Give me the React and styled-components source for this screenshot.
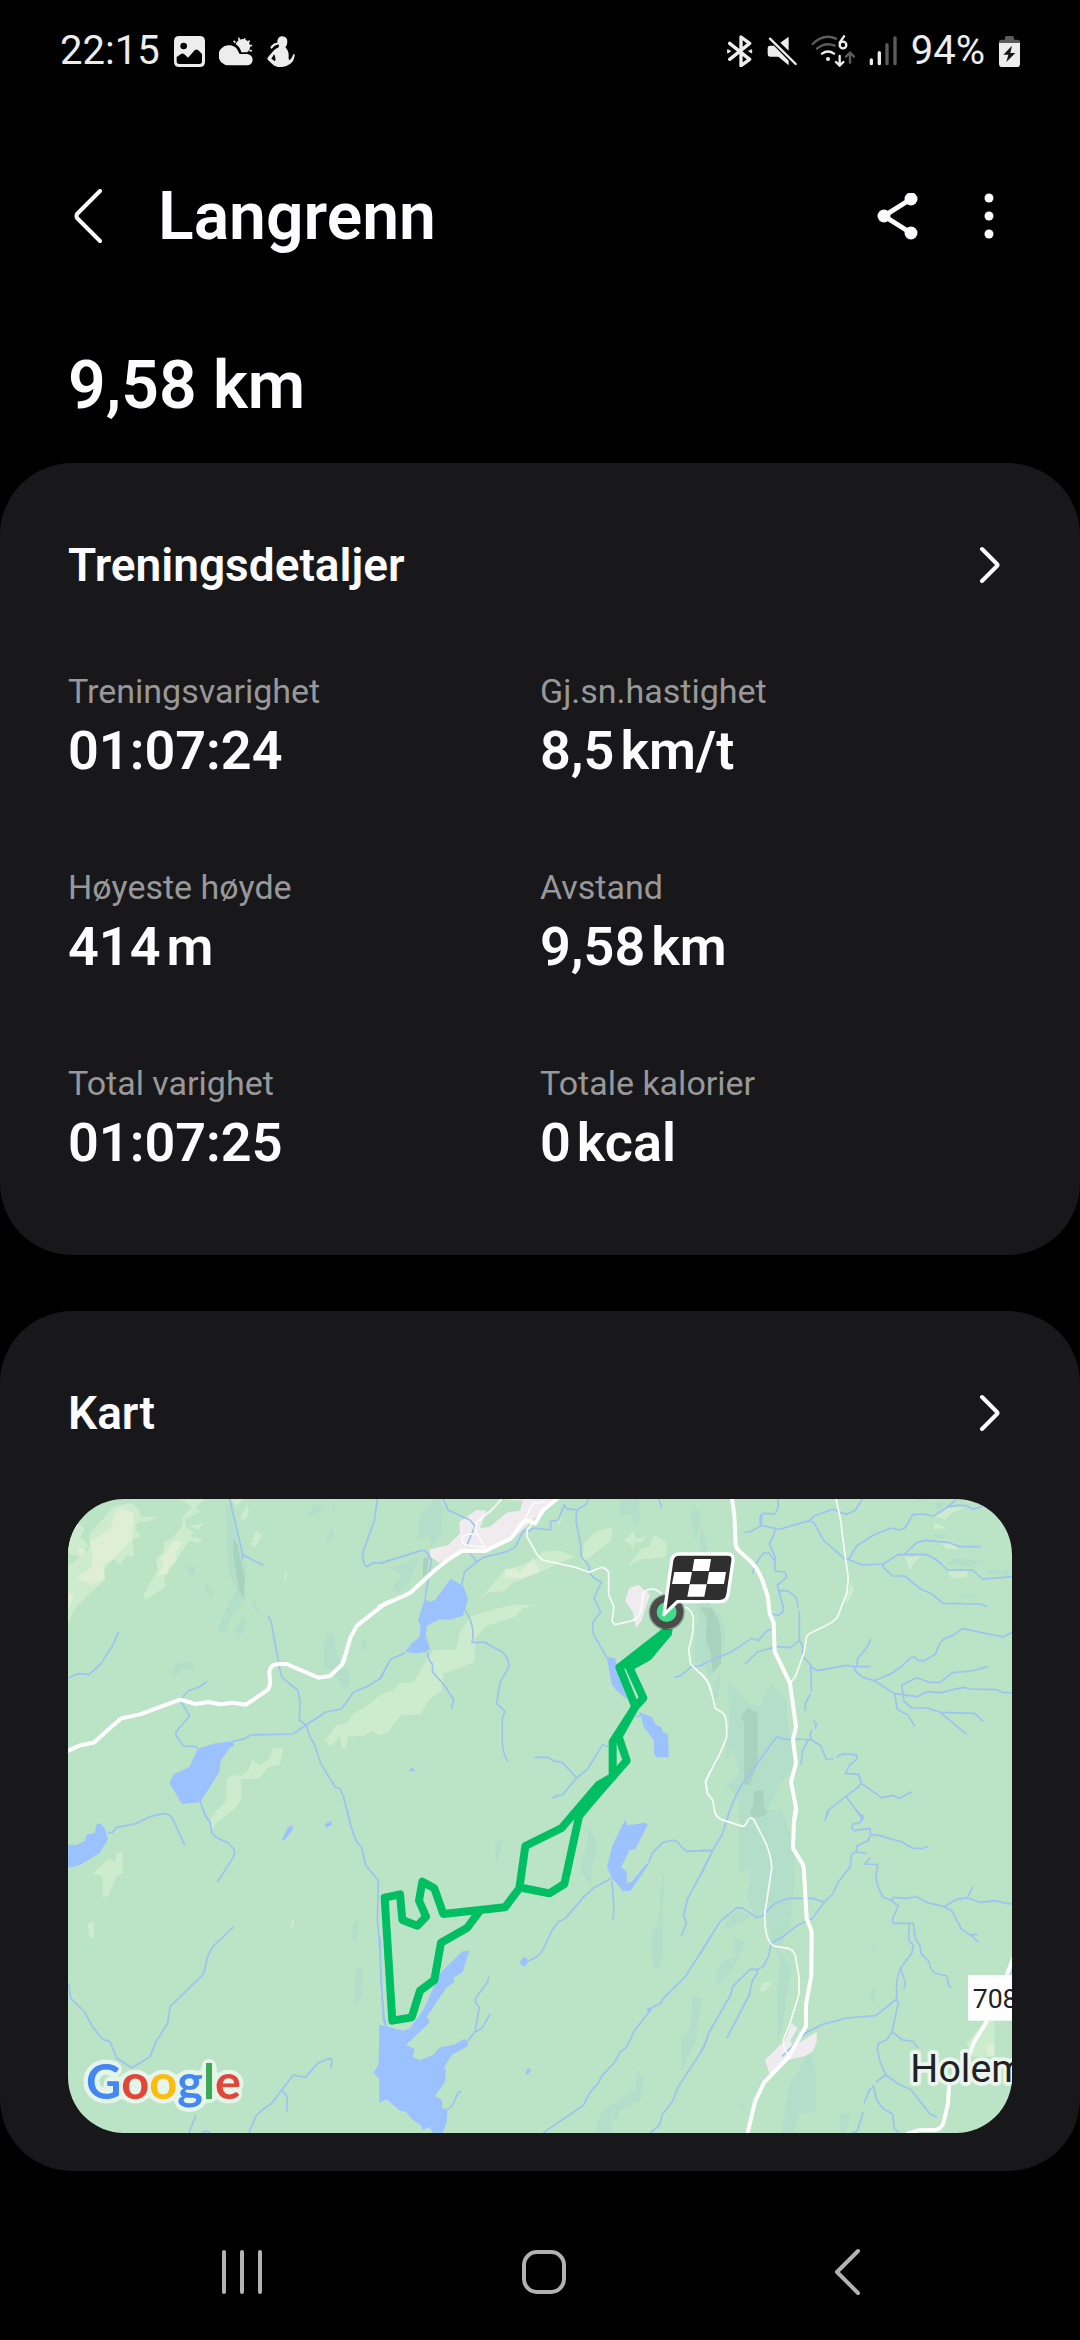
import React from "react";
import styled, { createGlobalStyle } from "styled-components";

const stats = [
  { label: "Treningsvarighet", value: "01:07:24" },
  { label: "Gj.sn.hastighet", value: "8,5", unit: "km/t" },
  { label: "Høyeste høyde", value: "414", unit: "m" },
  { label: "Avstand", value: "9,58", unit: "km" },
  { label: "Total varighet", value: "01:07:25" },
  { label: "Totale kalorier", value: "0", unit: "kcal" },
];

// Map terrain, split in six tiles. x/y is where the tile starts in the map.
const tiles = [
  {
    x: -24,
    y: -27,
    light: [
      "M0 27H70L48 100L75 115L60 140L85 165L62 200L24 190Z",
      "M24 230L60 200L90 170L88 130L130 85L160 50L212 38L240 60L238 80L292 80L270 92L232 98L228 120L242 140L218 148L222 200L200 198L180 224L160 208L134 235V270L48 350L24 400Z",
      "M360 27H432L405 58L426 62L375 88L378 110L400 125L392 140L428 145L412 160L388 150L330 240L312 262L316 290L258 330L248 318L292 240L288 205L310 190L312 158L340 140L365 112L368 80L395 50Z",
      "M388 108L432 100L414 120Z",
      "M562 45L566 70L550 96L541 80Z",
      "M512 27H550L528 48Z",
      "M588 122L607 135L585 172L571 165Z",
      "M676 238L683 255L670 276Z",
      "M990 606L965 612L920 648L880 672L862 700L828 706L794 752L812 770L840 740L845 775L858 775L864 740L910 738L934 724L958 736L990 725Z",
      "M640 774H670L660 824L624 832L598 866H542L544 930L520 960L480 990H446L500 930V865L525 852L540 862L568 838L575 808L600 826L628 806Z",
    ],
    pale: [
      "M160 75L180 55L222 70L216 150L182 185L160 208L130 225L134 270L90 283L52 264L95 230L98 200L90 155L130 130L155 112Z",
      "M345 150L368 158L345 190L350 212L326 230L322 252L290 258L312 220L303 205Z",
      "M24 305L42 320L24 355Z",
      "M50 172L75 182L65 200Z",
    ],
    shade: [
      "M498 45L520 40L522 110L556 230V325L535 350L512 380L494 438L474 415L500 355L530 300L505 240Z",
      "M740 75L765 45H790L775 70L748 84Z",
      "M815 32L828 50L818 70Z",
      "M818 100L820 140L795 170Z",
      "M375 228L408 232L400 264Z",
      "M432 270L455 295L460 322L436 300Z",
      "M570 335L585 332L600 362L592 375Z",
      "M548 380L560 395L545 436L522 425Z",
      "M336 552L350 520L405 516L400 540L362 538L346 565Z",
      "M802 430L818 432L832 500L872 560L865 590H845L822 545L792 530V470Z",
      "M904 447L918 450L916 483L903 475Z",
    ],
    rock: ["M520 145L532 165L555 270L550 325L538 300L520 200Z"],
    lake: ["M414 776L465 760L518 754L522 768L510 772L482 812L478 846L421 936L366 942L328 878L342 852L388 832Z"],
    stream: [
      "M509 27L549 195L547 204L549 195L610 226",
      "M952 27L943 92L907 192L912 222L920 230L940 218L965 219L990 211",
      "M24 565L52 551L87 554L123 521L156 470L176 426",
      "M441 574L418 591L384 603L360 630L389 678L347 726L349 739L371 768L408 770L414 776",
      "M624 376L634 398L660 540L666 562L714 602L720 635L718 690L738 705L750 740L764 765L782 820L825 890L840 896L850 918L868 990",
      "M518 754L555 746L572 735L698 732L738 705L798 666L844 657L881 606L920 590L963 564L990 510",
      "M421 936L434 974L446 990",
    ],
    road: ["M20 784L60 766L101 758L150 714L184 685L240 673L360 629L408 642L445 636L482 643L518 638L558 644L624 599Q631 590 630 575L628 545Q632 522 655 522L680 522L775 563L810 558L845 525Q853 510 856 495L872 440L892 406L975 341L994 333"],
    lane: [],
  },
  {
    x: 936,
    y: -27,
    light: [
      "M290 338L370 245L468 208L486 184L545 182L586 201L545 215L480 246L400 278L370 304L322 308Z",
      "M228 480L240 425L275 378L345 358L405 343L468 347L432 354L405 380L320 408L285 445L284 515L190 552L184 602L145 632L122 674H65L25 722L0 735V615L38 602L60 580L102 576L134 520L160 480Z",
      "M697 110L694 152L625 205L607 220L608 190L615 155L650 124Z",
      "M732 153L760 122L768 147L803 137L783 158L764 154L758 179L750 160Z",
      "M744 227L784 178L808 170L822 135L842 146L860 160L858 195L845 204L785 208Z",
      "M527 88L545 80L540 104Z",
    ],
    pale: [
      "M374 264V238L405 234L418 250L460 205L480 244L430 265Z",
    ],
    shade: [
      "M180 27L188 60L185 130L152 175V140L112 150L120 80L158 27Z",
      "M30 235L122 198L90 270L60 306L33 300L68 255Z",
      "M720 27H775L782 92L764 104L752 72H735L722 90Z",
      "M935 62L958 60V110L948 150L935 95Z",
      "M940 330H990V520L945 515V425L960 380Z",
    ],
    rock: ["M130 205L147 200L142 250L128 262Z", "M975 340H990V475L978 478Z"],
    urban: [
      "M370 27H530L490 60L400 145L320 188L240 182L178 218L150 200V178L205 165L240 130L238 96L290 60L320 62L300 115L330 110L380 68L420 62L428 32Z",
      "M748 294L775 284L810 315L795 358L786 390L768 414L758 365L735 332Z",
    ],
    lake: [
      "M212 266L250 288L264 328L248 378L205 390L178 388L140 408L138 438L150 476L136 487L110 490L76 486L95 460L118 442L122 405L114 390L135 325L148 335L165 330Z",
      "M680 500L705 505L742 630L708 600L695 582Z",
      "M782 668L815 680L828 705L845 712L848 726L864 732L866 802H830L822 790V752L790 708Z",
      "M97 832L106 843H88Z",
    ],
    stream: [
      "M0 220L122 182Q135 180 142 188L154 210L148 250L135 325",
      "M190 27L204 60L270 90L285 108L260 168",
      "M270 190L290 216L254 245L245 285",
      "M290 216L310 202L383 184L405 172L430 122L448 122L462 114L512 120V94L535 90L553 44L560 56L590 60L620 42L625 27",
      "M590 60L588 92L602 165L604 200L627 228L630 250L643 265L664 276L642 324L662 365L637 400L640 432L680 503",
      "M248 354Q265 370 272 394Q284 425 276 457H315L345 475Q375 485 384 510L387 530L360 578L350 640L375 664L367 685V762Q372 800 384 815",
      "M76 488L32 508L0 566",
      "M143 485Q143 510 157 522L158 546L195 588L221 630L214 657",
      "M836 27L846 54",
      "M463 802H505L518 811L548 818L590 864L622 838L668 764L685 770",
      "M590 864L547 915L532 916L517 925",
      "M884 562L900 558L935 530L960 528L990 517",
      "M765 680L782 678L780 668",
    ],
    road: ["M-6 352L90 309L165 240L200 212L245 183H315L392 146L428 97Q440 90 450 94L465 100L490 60L534 24"],
    lane: [
      "M365 27L335 60L292 95L285 118L314 172L260 165Q244 160 246 145Q250 132 275 132L290 135",
      "M495 36L460 40L432 92M455 103L442 120L440 138L472 195L488 210L590 233L628 247L665 232Q684 236 686 250V315L702 350L696 392L704 404L755 393Q780 385 785 350L790 310Q800 294 825 298L845 310",
      "M915 350Q940 362 940 390L938 430L926 480L932 522L975 565Q988 580 990 600",
      "M990 845L978 875L982 910L990 920",
    ],
  },
  {
    x: 1896,
    y: -27,
    light: [
      "M706 78L738 50L790 54L755 70L735 90Z",
      "M706 98L739 115L700 116Z",
      "M616 202L665 197L640 222L630 244Z",
      "M744 245L805 240L800 262L755 266Z",
      "M722 160H755L778 178L738 176Z",
      "M456 278L460 305L440 344L435 320Z",
    ],
    pale: [],
    shade: [
      "M0 120L20 145L22 180L0 185Z",
      "M0 340L30 345L64 380L75 430L72 490L40 555L20 560V530L0 515Z",
      "M82 572L115 605L140 640L180 650L212 575L260 630L265 720L285 830L250 870L185 990H118V930L80 885L120 850L95 770Z",
      "M744 222L755 204L854 212L808 232Z",
      "M862 240H936L925 258L870 252Z",
      "M698 134L748 132L722 148Z",
      "M640 38L655 28H685Z",
      "M694 38L738 36L720 60Z",
      "M770 320L815 312L825 325Z",
      "M40 580L62 545L55 625L40 620Z",
      "M118 668V750L75 815L80 730Z",
    ],
    rock: [
      "M0 350L35 355L56 390L64 440L63 522L38 548L32 490L18 450L20 385Z",
      "M142 653L173 670V820L150 884H132V695L123 685Z",
      "M162 902L191 900V945L200 972L185 980H150L160 940Z",
    ],
    lake: ["M180 72L188 76L186 104L178 102Z"],
    stream: [
      "M233 27L235 50L225 72L190 70L180 84L184 106L150 126H133",
      "M184 106L238 118L328 92L342 78L398 58L438 73L464 62L488 27",
      "M328 92L342 98L370 150L432 205L450 210L487 225L550 222L594 194L676 193Q706 200 742 240H818L847 267L936 260",
      "M446 208L470 168L516 138L572 114L598 120L615 114L638 74L670 72L700 78L735 57L770 27",
      "M738 52L770 46L796 46L820 58L850 48",
      "M614 192L650 158L678 151L748 158L780 170L842 170",
      "M550 222V232L578 258H614L662 297L695 312L730 340L840 342L862 349",
      "M225 118L222 135L208 162L225 200V243L255 246L260 262L232 285L236 302L249 346V366L235 376L215 372",
      "M157 252L165 225L190 189H207L225 214",
      "M236 302H262L288 322L295 352M298 362V452L308 468V500L332 525L334 604M332 612L316 640V662",
      "M0 526L95 485L155 445L175 452L196 427L214 416",
      "M298 452L272 473L230 470L172 486L135 523",
      "M332 530L352 542L440 526L463 530H510M470 528L474 504L500 474L512 447",
      "M463 530L465 542L488 562L522 572L572 552L606 528L634 502H645L655 512H672L706 493L718 462L730 448L758 436L788 416L910 441L936 427",
      "M522 572L584 611L650 620L682 605L722 608L790 592L810 597L890 599L912 608H936",
      "M584 611L591 657L625 676L645 710",
      "M863 530L815 543L758 548L720 577H688L650 563L605 586L612 634L636 654H682L720 667L824 670L850 695M720 667L800 733",
      "M340 690L349 702L345 716M336 720L330 735L335 750L285 747L255 748L230 740L125 885Q98 930 80 990",
      "M325 750L308 780L303 824M335 750L363 768L378 807H400M410 803Q422 790 440 792L470 795V808L448 826L436 850L475 853L484 878L474 892L438 919L388 958L375 990M438 919L490 990M484 880L545 923L578 916L598 925L636 905",
    ],
    road: ["M95 20L103 75L107 165Q110 178 122 187L150 212Q170 230 185 265L203 318L209 370L221 400L224 485L270 580L288 710L279 750L288 820L273 875L289 958L282 996"],
    lane: [
      "M408 27L421 85L435 195L445 265L440 310L412 382Q400 396 380 406L330 430Q318 438 318 450L312 488L286 560L270 580",
      "M0 548Q20 565 30 590L46 655L68 668Q80 680 80 715V742L60 790L16 874L22 910L38 930L45 968Q55 990 72 990M145 990L155 984L163 990",
    ],
  },
  {
    x: -24,
    y: 933,
    light: [
      "M470 0H498L458 55L446 35Z",
      "M146 146L165 155L168 130L188 126V190L170 198L145 256L128 264V198L96 192Z",
      "M83 343L101 335L102 385L88 380Z",
      "M704 320L698 362L690 345Z",
    ],
    pale: [],
    shade: [
      "M893 328L892 395L876 385L873 350Z",
      "M908 468L907 550L890 586L884 570L888 480Z",
    ],
    lake: [
      "M20 103L50 105L75 92L80 74L105 68L110 42L122 41L135 58L144 88L118 130L60 165L20 175Z",
      "M698 45V60L672 92L666 90L682 55Z",
      "M794 43L814 32L816 44L798 54Z",
      "M960 645L1000 655V880L980 868L958 878L968 838L962 812L941 788L955 765Z",
    ],
    stream: [
      "M144 68L157 68L168 53L224 42L270 20L312 10Q330 12 340 30L375 108",
      "M430 0L438 22L450 34L456 70Q466 82 480 88L505 99L523 120V135L518 145L471 218",
      "M521 351L458 410L442 442L434 480L427 496L330 590L323 640L288 695L270 740L216 774L170 744L150 695L128 688L98 650L72 603L32 565L26 520",
      "M862 0Q870 50 890 95L904 110L917 165L955 212L952 330L958 400L964 500L970 630L978 650",
      "M812 776L816 752L812 744L775 758L736 802L700 795L665 840L635 880L606 900L588 918L567 968M665 840L682 860L680 905",
      "M408 915L387 968M424 968L438 962L452 968",
    ],
    road: [],
    lane: [],
  },
  {
    x: 936,
    y: 933,
    light: [],
    pale: [],
    shade: [
      "M345 98L370 88L362 125L348 158Z",
      "M625 52L646 80V140L636 165L635 230L605 190L603 150L618 130Z",
      "M848 190L856 200L848 290V430L836 478L820 480L815 370L832 345Z",
      "M936 556L966 564L948 690L905 782L903 682L932 655Z",
      "M770 780L792 808L780 872L722 900L708 936L695 905L694 968H645L662 905L765 840Z",
    ],
    lake: [
      "M-2 645L70 662L90 655L130 600L175 500L185 484L248 424L268 422L248 486L220 503L223 516L200 532L140 620L150 636L78 705L104 717L98 740L118 751L158 736L180 712L222 704L252 687L264 695V708L215 735L192 772L198 780L195 815L165 858L186 870L187 895L202 898L200 940L188 968H158L150 952L128 960L122 945L95 928L78 905L60 902L18 866L-2 878Z",
      "M735 30L742 46L795 38L803 45L766 118L748 120L724 172L740 185L742 220L755 215L800 160L805 165L752 242L730 244L696 205L681 170L697 108Z",
      "M421 452L434 440L447 452L436 470L422 464Z",
      "M437 790L442 777L452 775L450 786L442 794Z",
      "M800 600L808 590L816 599L806 608Z",
    ],
    stream: [
      "M446 453L468 442L485 426L515 364L535 336L555 326L612 260L642 233L694 205",
      "M696 212L702 300L698 332",
      "M805 160L818 128L848 98L878 90L895 97Q905 115 922 124L990 121",
      "M990 140L922 268L911 315L919 341L904 377",
      "M990 384L916 500L850 565L842 580L818 592L762 664L740 712L722 724L702 760L668 794L654 820L628 850L610 886L490 968",
      "M990 660L972 712L895 830L878 874L848 912L838 946L812 968",
      "M327 499L323 515L287 565V580L298 592L285 666L262 694M285 666L306 655L331 611",
      "M243 844L233 850L217 888L202 898",
      "M0 380L3 520L12 620L18 648",
    ],
    road: [],
    lane: [],
  },
  {
    x: 1896,
    y: 933,
    light: [
      "M190 516L215 517L196 544L176 542Z",
      "M855 632H884V712L870 740H820L800 700Z",
    ],
    pale: ["M862 706L882 704L884 738L860 735Z"],
    shade: [
      "M118 0H245L280 95L285 220L270 345L240 420L275 470L268 520L245 660L232 690V560L240 450L215 400L195 290L165 330L142 260L155 175L118 185Z",
      "M72 360L80 320L112 302L150 320L120 340Z",
      "M46 500L60 460L102 440V380L132 396L115 450L90 490L50 530Z",
      "M330 720L350 800L348 905L298 910L280 968H245L265 835Z",
      "M420 912L448 910V940L435 968H418Z",
      "M518 392L525 410L522 435Z",
      "M524 535V592L507 545Z",
      "M120 865L130 885L122 900Z",
    ],
    rock: ["M150 0H200V12L180 22H155Z"],
    urban: [
      "M275 640L293 655L272 690L278 712L350 665V695L338 725L315 738L262 750L210 795L195 750L255 690Z",
    ],
    lake: ["M480 15L492 15L488 35Z", "M500 86L510 84L506 95Z"],
    stream: [
      "M90 0L67 72L38 122L0 200M0 122H38",
      "M384 0L375 32",
      "M468 0L487 20L480 38L460 42Q450 52 462 62L510 55L512 75L504 92L470 108V126L500 130M468 124Q450 130 452 168L415 216L398 252L372 278L336 326L292 346L245 382L214 400L205 440L188 472L172 478L150 478L98 530L92 555L25 670Q18 700 0 728",
      "M170 478L172 490L157 512L148 555L80 685",
      "M372 276L338 265H265L222 282L186 318L170 322L128 295L110 293L60 335L0 432",
      "M512 74L540 77L606 96L636 114L665 116L685 109",
      "M512 142L495 162L533 163L528 205Q535 240 550 262L572 270L595 288L578 325V340H640L645 382L660 408L663 430L688 456Q690 480 705 489L740 498L747 528L755 532",
      "M572 270L582 262L618 265L650 260L680 277L732 290L770 268L802 264L840 277L885 272L920 281H936M802 264L818 231M732 290L755 302L785 358L810 374H832M810 374L837 397",
      "M628 344L626 392L640 404L636 428L602 474L590 512V567L527 617L440 624L365 644L318 668L246 740M602 474L616 518L612 536",
      "M590 567L595 577L576 666L560 690L536 700L532 716L540 755L557 795L528 816M576 666L608 690L638 694L655 715",
      "M520 830L508 840L492 880M520 825L530 870L548 895L578 912L583 955L598 968M490 905L472 962L455 968M557 795L600 825L632 838L690 912L712 922",
    ],
    road: [
      "M288 -4L282 30L279 115L307 160Q312 170 312 185L320 325L335 365L334 495L318 585V648L265 742L192 818L165 875L142 972",
      "M940 445L920 495M862 632L820 700L805 745M748 815L744 880L730 940Q722 960 700 960L655 961L620 972",
    ],
    lane: ["M42 0Q48 20 62 28L128 49Q136 48 142 34Q152 16 162 30L200 105Q216 150 215 175L194 315L195 345Q200 400 225 409L265 415Q288 425 288 450L297 500V552L270 640L250 690L252 715L265 735"],
  },
];

const GlobalStyle = createGlobalStyle`
  * {
    box-sizing: border-box;
  }

  body {
    margin: 0;
    background: #000000;
    color: #fcfcff;
    font-family: Roboto, "Noto Sans", sans-serif;
  }

  svg {
    display: block;
  }
`;

const Page = styled.div`
  display: flex;
  flex-direction: column;
  min-height: 100vh;
`;

const StatusBar = styled.div`
  display: flex;
  justify-content: space-between;
  padding: 27px 60px 25px;
  color: #ededed;
  font-size: 40px;
  line-height: 48px;
`;

const StatusGroup = styled.div`
  display: flex;
  align-items: center;
  gap: 14px;
`;

const Header = styled.header`
  display: flex;
  align-items: center;
  padding: 79px 67px 0 64px;
`;

const Title = styled.h1`
  flex: 1;
  margin: 0 0 0 46px;
  font-size: 66px;
  font-weight: 600;
  line-height: 76px;
`;

const IconButton = styled.button`
  display: flex;
  align-items: center;
  justify-content: center;
  width: 48px;
  height: 52px;
  padding: 0;
  border: 0;
  background: none;
  color: inherit;
  cursor: pointer;
`;

const HeaderActions = styled.div`
  display: flex;
  gap: 44px;
`;

const Summary = styled.p`
  margin: 93px 68px 39px;
  font-size: 66px;
  font-weight: 600;
  line-height: 76px;
`;

const Cards = styled.main`
  display: flex;
  flex-direction: column;
  gap: 56px;
`;

const Card = styled.section`
  padding: 76px 68px ${(props) => props.$bottom}px;
  border-radius: 72px;
  background: #18181a;
`;

const CardHeader = styled.div`
  display: flex;
  align-items: center;
  justify-content: space-between;
  margin-bottom: ${(props) => props.$space}px;
`;

const CardTitle = styled.h2`
  margin: 0;
  font-size: 46px;
  font-weight: 600;
  line-height: 52px;
`;

const StatGrid = styled.dl`
  display: grid;
  grid-template-columns: 1fr 1fr;
  row-gap: 84px;
  margin: 0;
`;

const Label = styled.dt`
  color: #98989a;
  font-size: 34px;
  line-height: 40px;
`;

const Value = styled.dd`
  display: flex;
  gap: 6px;
  margin: 8px 0 0;
  font-size: 54px;
  font-weight: 600;
  line-height: 64px;
`;

const MapFrame = styled.div`
  overflow: hidden;
  border-radius: 56px;
  background: #bbe3c6;

  svg {
    width: 100%;
    height: auto;
  }
`;

const NavBar = styled.nav`
  display: flex;
  justify-content: center;
  gap: 254px;
  margin-top: auto;
  padding: 0 0 42px 8px;
  color: #b2b2b2;
`;

const Chevron = () => (
  <svg width="24" height="40" viewBox="0 0 24 40" fill="none" stroke="currentColor" strokeWidth="4" strokeLinecap="round" strokeLinejoin="round">
    <path d="M6 4L21 19Q22 20 21 21L6 36" />
  </svg>
);

const StatusIconsLeft = () => (
  <>
    <svg width="31" height="31" viewBox="402 47 93 93" fill="currentColor">
      <path fillRule="evenodd" d="M418 47H479Q495 47 495 63V124Q495 140 479 140H418Q402 140 402 124V63Q402 47 418 47ZM431 67A10 10 0 1 0 431 87A10 10 0 1 0 431 67ZM410 110V123Q410 131 418 131H478Q486 131 486 123V101L474 89Q469 85 464 90L444 112L433 102Q428 97 423 101Z" />
    </svg>
    <svg width="34" height="31" viewBox="538 47 102 93" fill="currentColor">
      <path d="M566 75C580 74 592 82 597 96L600 101H622A17 17 0 0 1 622 135H567A29 29 0 0 1 566 75Z" />
      <path d="M588 72A22 22 0 1 1 622 96H605Q600 78 588 72Z" />
      <path d="M587 67L582 61M599 60L597 52M613 61L616 54M624 67L630 61M629 78L637 75M629 90L637 92" stroke="currentColor" strokeWidth="5" />
    </svg>
    <svg width="28" height="31" viewBox="689 47 84 93" fill="currentColor">
      <path fillRule="evenodd" d="M720 62Q722 48 735 48Q750 49 750 64Q750 76 744 81Q755 92 754 108Q753 118 756 119Q763 116 767 103Q772 98 772 106Q770 122 758 131Q744 141 730 140Q713 140 704 130L692 119Q688 114 693 109L710 90Q715 84 722 82Q727 78 723 72L712 76L703 85Q696 83 702 76Q710 66 720 67ZM710 102L702 115L713 123Q717 112 710 102Z" />
    </svg>
  </>
);

const StatusIconsRight = () => (
  <>
    <svg width="27" height="32" viewBox="79 44 81 96" fill="none" stroke="currentColor" strokeWidth="10" strokeLinejoin="round" strokeLinecap="round">
      <path d="M90 69L150 117L124 136V50L150 69L90 117" />
      <path d="M84 89V98L92 93ZM156 89V98L148 93Z" strokeWidth="3" fill="currentColor" />
    </svg>
    <svg width="30" height="30" viewBox="206 48 90 90" fill="currentColor">
      <path d="M208 84Q208 77 215 77H227L271 122V136L240 110H215Q208 110 208 103ZM271 50V92L246 68Z" />
      <path d="M215 56L292 132" stroke="currentColor" strokeWidth="7" strokeLinecap="round" />
    </svg>
    <svg width="44" height="32" viewBox="340 45 132 96" fill="none" strokeWidth="7" strokeLinecap="round">
      <path d="M345 72Q378 39 415 56M358 86Q383 65 411 77M457 128V100M445 110L457 98L469 110" stroke="#5c5c5c" />
      <path d="M373 101Q391 88 409 101M426 108V135M415 126L426 137L437 126" stroke="currentColor" />
      <circle cx="391" cy="117" r="6" fill="currentColor" />
      <path d="M439 49L426 68" stroke="currentColor" />
      <circle cx="436" cy="75" r="10" stroke="currentColor" />
    </svg>
    <svg width="28" height="32" viewBox="499 44 84 96" fill="none" stroke="currentColor" strokeWidth="10" strokeLinecap="round">
      <path d="M506 119V130M530 97V130" />
      <path d="M553 73V130M577 53V130" stroke="#5c5c5c" />
    </svg>
  </>
);

const BatteryIcon = () => (
  <svg width="21" height="31" viewBox="897 47 63 93">
    <path d="M897 68V65Q897 58 905 58H915V52Q915 47 920 47H937Q942 47 942 52V58H952Q960 58 960 65V68Z" fill="#5c5c5c" />
    <path d="M897 68H960V130Q960 140 950 140H907Q897 140 897 130Z" fill="currentColor" />
    <path d="M936 76L910 103H925L919 125L946 98H931Z" fill="#161616" />
  </svg>
);

const RouteMap = () => (
  <svg viewBox="0 0 2832 1902" role="img" aria-label="Kart over turen">
    <defs>
      {/* Soft round outline behind the map logo */}
      <filter id="halo" x="-10%" y="-20%" width="120%" height="140%" colorInterpolationFilters="sRGB">
        <feGaussianBlur in="SourceAlpha" stdDeviation="9" />
        <feComponentTransfer result="grown">
          <feFuncA type="linear" slope="20" intercept="-1" />
        </feComponentTransfer>
        <feFlood floodColor="#e6f5ea" />
        <feComposite in2="grown" operator="in" result="outline" />
        <feMerge>
          <feMergeNode in="outline" />
          <feMergeNode in="SourceGraphic" />
        </feMerge>
      </filter>
    </defs>
    {tiles.map((tile) => (
      <g key={`${tile.x}:${tile.y}`} transform={`translate(${tile.x} ${tile.y})`}>
        <path d={tile.shade.join("")} fill="#b3dfca" />
        <path d={tile.light.join("")} fill="#cdebcd" />
        <path d={tile.pale.join("")} fill="#dfeed6" />
        {tile.rock && <path d={tile.rock.join("")} fill="#a9d2bc" />}
        {tile.urban && <path d={tile.urban.join("")} fill="#efebef" />}
        <path d={tile.stream.join("")} fill="none" stroke="#9dc3f2" strokeWidth="5" strokeLinejoin="round" />
        <path d={tile.lake.join("")} fill="#9cc1ff" />
        <path d={tile.lane.join("")} fill="none" stroke="#f8fdf9" strokeWidth="5" strokeLinejoin="round" />
        <path d={tile.road.join("")} fill="none" stroke="#ffffff" strokeWidth="12" strokeLinejoin="round" />
      </g>
    ))}

    {/* Track and finish flag */}
    <g transform="translate(936 -27)">
      <g fill="none" stroke="#00bf63" strokeWidth="24" strokeLinejoin="round">
        <path d="M862 420L718 532L766 650L790 624L748 532L805 500L866 425M766 650L698 756V860L655 885L545 1014L436 1068L418 1195L375 1252L190 1272L163 1195L127 1175L117 1232L138 1280L112 1307L67 1290L60 1213L14 1223L37 1592L95 1582L120 1502L163 1470L183 1358L262 1313L300 1262" />
        <path d="M766 650L716 740L740 812L698 860L598 975L553 1182L508 1210L428 1194" />
      </g>
      <path d="M850 415L878 418L875 435L812 508L760 537L720 535ZM655 880L700 858L700 870L610 982L590 990L560 985Z" fill="#00bf63" />
      <circle cx="860" cy="367" r="54" fill="#2b3b33" opacity="0.4" />
      <circle cx="860" cy="366" r="40" fill="#3fdc8b" stroke="#4b4b4b" strokeWidth="20" />
      <path d="M852 374L875 212Q878 192 898 192H1042Q1062 192 1059 212L1044 314Q1040 335 1019 335H892Z" fill="#2f2f2f" stroke="#ffffff" strokeWidth="10" strokeLinejoin="round" />
      <path d="M943 207H993L987 243H937ZM883 246H936L929 282H876ZM987 246H1038L1032 282H981ZM929 283H980L973 320H922Z" fill="#ffffff" />
    </g>

    <g transform="translate(1896 933)" fontFamily="Roboto, sans-serif" fill="#202124">
      <rect x="804" y="495" width="140" height="137" fill="#ffffff" />
      <text x="818" y="595" fontSize="80">708</text>
      <text x="631" y="815" fontSize="118" stroke="#eaf5ed" strokeWidth="22" paintOrder="stroke" strokeLinejoin="round">Holem</text>
    </g>

    <text x="54" y="1800" fontFamily="Lato, sans-serif" fontSize="146" fontWeight="700" filter="url(#halo)">
      <tspan fill="#4486f4">G</tspan>
      <tspan fill="#e24639">o</tspan>
      <tspan fill="#f9bc0f">o</tspan>
      <tspan fill="#4486f4">g</tspan>
      <tspan fill="#3ba757">l</tspan>
      <tspan fill="#e24639">e</tspan>
    </text>
  </svg>
);

const App = () => {
  return (
    <Page>
      <GlobalStyle />
      <StatusBar>
        <StatusGroup>
          <span>22:15</span>
          <StatusIconsLeft />
        </StatusGroup>
        <StatusGroup>
          <StatusIconsRight />
          <span>94%</span>
          <BatteryIcon />
        </StatusGroup>
      </StatusBar>

      <Header>
        <IconButton aria-label="Tilbake">
          <svg width="32" height="56" viewBox="0 0 32 56" fill="none" stroke="currentColor" strokeWidth="4" strokeLinecap="round" strokeLinejoin="round">
            <path d="M28 2L5 25Q4 27 5 29L28 52" />
          </svg>
        </IconButton>
        <Title>Langrenn</Title>
        <HeaderActions>
          <IconButton aria-label="Del">
            <svg width="42" height="48" viewBox="0 0 42 48" fill="currentColor">
              <path d="M35 6L8 23L35 40" fill="none" stroke="currentColor" strokeWidth="5" />
              <circle cx="8" cy="23" r="6.5" />
              <circle cx="35" cy="6" r="6.5" />
              <circle cx="35" cy="40" r="6.5" />
            </svg>
          </IconButton>
          <IconButton aria-label="Flere valg">
            <svg width="10" height="48" viewBox="0 0 10 48" fill="currentColor">
              <circle cx="5" cy="5" r="4.5" />
              <circle cx="5" cy="23" r="4.5" />
              <circle cx="5" cy="41" r="4.5" />
            </svg>
          </IconButton>
        </HeaderActions>
      </Header>

      <Summary>9,58 km</Summary>

      <Cards>
        <Card $bottom={80}>
          <CardHeader $space={80}>
            <CardTitle>Treningsdetaljer</CardTitle>
            <IconButton aria-label="Vis treningsdetaljer">
              <Chevron />
            </IconButton>
          </CardHeader>
          <StatGrid>
            {stats.map((stat) => (
              <div key={stat.label}>
                <Label>{stat.label}</Label>
                <Value>
                  <span>{stat.value}</span>
                  {stat.unit && <span>{stat.unit}</span>}
                </Value>
              </div>
            ))}
          </StatGrid>
        </Card>

        <Card $bottom={38}>
          <CardHeader $space={60}>
            <CardTitle>Kart</CardTitle>
            <IconButton aria-label="Vis kart">
              <Chevron />
            </IconButton>
          </CardHeader>
          <MapFrame>
            <RouteMap />
          </MapFrame>
        </Card>
      </Cards>

      <NavBar>
        <IconButton aria-label="Siste apper">
          <svg width="42" height="46" viewBox="0 0 42 46" stroke="currentColor" strokeWidth="4" strokeLinecap="round">
            <path d="M3 3V43M21 3V43M39 3V43" />
          </svg>
        </IconButton>
        <IconButton aria-label="Hjem">
          <svg width="44" height="44" viewBox="0 0 44 44" fill="none" stroke="currentColor" strokeWidth="4">
            <rect x="2" y="2" width="40" height="40" rx="13" />
          </svg>
        </IconButton>
        <IconButton aria-label="Tilbake">
          <svg width="28" height="48" viewBox="0 0 28 48" fill="none" stroke="currentColor" strokeWidth="4" strokeLinecap="round" strokeLinejoin="round">
            <path d="M26 3L5 24L26 45" />
          </svg>
        </IconButton>
      </NavBar>
    </Page>
  );
};

export default App;
